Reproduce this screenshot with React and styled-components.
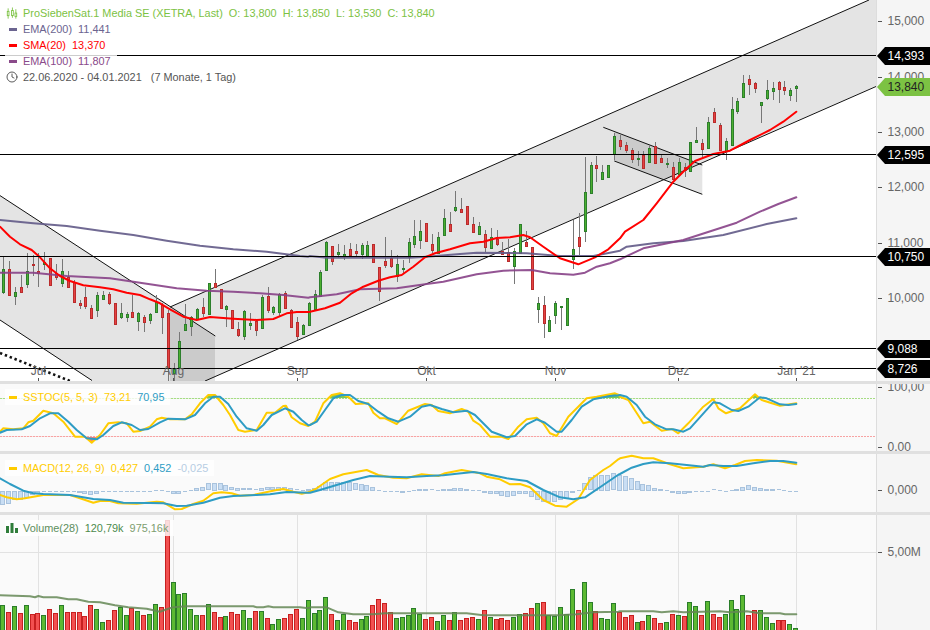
import React from 'react';
import styled, { createGlobalStyle } from 'styled-components';
import { Clock } from 'lucide-react';

const GlobalStyle = createGlobalStyle`
  html, body { margin: 0; padding: 0; background: #fff; }
  body { font-family: "Liberation Sans", Arial, sans-serif; }
`;

const pitch = 5.874;
const col = (i) => Math.round(3.2 + i * pitch);
const WIDTH = 876;

// helper: flat list of coordinates measured in a 3x crop → page pixels
const pts = (arr, x0, y0) => {
  const out = [];
  for (let i = 0; i < arr.length; i += 2) out.push([x0 + arr[i] / 3, y0 + arr[i + 1] / 3]);
  return out;
};
const poly = (p) => p.map(([x, y]) => `${x.toFixed(1)},${y.toFixed(1)}`).join(' ');

/* ---------- candles: high, bodyTop, bodyBottom, low, up ---------- */
const c1 = [
  [172,208,275,282,1],[183,208,286,288,0],[262,277,287,315,1],[225,262,275,278,0],[160,214,253,265,1],[165,192,194,228,0],
  [160,214,219,260,0],[157,186,193,210,1],[175,175,254,257,0],[193,219,230,240,0],[178,214,248,260,1],[214,232,260,260,0],
  [240,246,307,307,0],[300,310,314,328,0],[260,292,317,328,0],[315,324,353,358,0],[275,286,329,350,1],[273,286,297,300,1],
  [275,283,310,316,0],[310,310,371,371,0],[310,340,350,358,1],[335,343,350,365,1],[285,335,350,352,0],[335,340,362,392,1],
  [345,352,367,395,0],[340,343,359,372,1],[285,305,335,335,1],[310,315,352,402,0],[330,340,505,550,0],[490,507,520,550,1],
  [395,423,500,500,1],[312,373,391,393,1],[348,350,377,408,1],[325,328,358,358,1],[295,322,340,350,0],[248,250,342,342,1],
  [207,250,262,265,0],[267,267,323,325,0],[315,318,326,380,1],[330,331,384,385,0],[365,388,404,412,0],[330,334,407,420,1],
  [340,370,374,390,1],[360,362,389,407,0],[285,292,383,384,1],[262,288,329,340,0],[317,322,335,345,1],[278,283,335,352,1],
  [272,280,325,328,0],[328,331,380,380,0],[350,367,407,420,0],[372,374,401,405,1],[305,310,374,375,1],
];
const c2 = [
  [330,343,387,388,1],[270,277,347,347,1],[183,187,270,272,1],[197,199,242,255,0],[192,217,222,235,1],[195,223,228,240,1],
  [190,208,225,232,0],[193,213,218,230,0],[190,196,221,236,1],[183,196,228,230,1],[192,193,245,247,0],[260,262,333,362,0],
  [170,244,255,265,0],[210,235,257,265,0],[225,253,287,305,1],[240,265,267,280,1],[175,187,230,250,1],[120,169,191,205,1],
  [120,154,179,207,1],[130,130,183,183,0],[162,193,209,218,0],[155,172,218,218,1],[87,115,164,165,1],[97,132,152,155,0],
  [33,82,89,95,1],[53,87,95,100,0],[77,79,131,132,0],[110,132,155,160,0],[127,139,161,165,1],[150,162,200,215,0],
  [143,172,203,205,1],[150,178,191,197,0],[187,213,223,225,0],[178,217,242,243,0],[205,214,257,312,1],[133,133,220,220,1],
  [153,186,197,197,0],[202,202,326,326,0],[350,370,386,430,1],[348,376,430,473,0],[407,420,452,455,1],[363,370,404,432,1],
  [378,379,381,450,1],[355,355,434,434,1],[120,208,236,268,1],[100,172,197,225,0],
];
const c3 = [
  [290,397,512,545,1],[305,316,398,400,1],[288,316,323,365,0],[315,337,357,358,1],[315,316,350,350,1],[218,229,283,300,1],
  [225,240,257,270,0],[245,255,270,278,0],[265,270,296,310,0],[272,295,298,318,1],[272,285,323,323,0],[255,265,305,305,1],
  [245,257,309,310,0],[285,295,305,310,0],[295,310,311,325,1],[305,322,358,360,0],[295,307,342,345,1],[310,320,330,352,0],
  [245,247,334,335,1],[202,241,245,247,1],[237,250,266,298,0],[172,187,263,265,1],[145,156,186,188,0],[190,196,270,272,0],
  [235,243,272,300,1],[112,148,255,255,1],[115,124,152,162,1],[45,70,110,115,1],[45,58,71,105,0],[65,68,83,100,0],
  [125,127,135,188,1],[60,91,113,120,1],[65,85,92,120,1],[63,67,87,128,0],[63,82,89,105,0],[85,91,105,122,1],[75,77,85,125,1],
];
const toPx = (list, y0) => list.map(([h, t, b, l, u]) => ({ h: y0 + h / 3, t: y0 + t / 3, b: y0 + b / 3, l: y0 + l / 3, up: !!u }));
const candles = [...toPx(c1, 200), ...toPx(c2, 180), ...toPx(c3, 60)];

/* ---------- main chart lines ---------- */
const sma20 = [
  ...pts([0,80,30,110,60,133,95,150,120,172,150,205,180,228,210,243,250,256,300,262,340,268,380,278,420,285,450,298,480,310,510,328,550,350,590,360,630,351,700,356,770,360,820,357,860,340,890,336,925,336], 0, 200),
  ...pts([0,395,45,385,90,368,125,340,160,320,205,302,240,292,275,285,310,260,345,232,375,220,420,208,480,190,520,185,560,174,600,172,640,165,660,172,700,200,750,235,805,253,855,232,895,208,930,175], 310, 180),
  ...pts([165,515,220,480,260,430,310,365,345,330,375,303,430,282,480,272,540,240,600,210,640,185,679,155], 570, 60),
];
const ema200 = [
  ...pts([0,60,100,70,200,78,300,92,400,105,500,122,600,137,700,148,800,155,900,168,925,170], 0, 200),
  ...pts([0,228,50,233,150,233,300,233,350,230,450,222,500,218,650,220,750,228,850,228,930,212], 310, 180),
  ...pts([170,560,250,550,340,543,460,525,590,492,679,475], 570, 60),
];
const ema100 = [
  ...pts([0,218,100,218,200,228,330,235,420,248,530,265,620,272,700,275,780,280,850,285,925,293], 0, 200),
  ...pts([0,352,80,343,150,328,260,325,350,312,400,305,500,283,580,272,665,270,720,280,790,284,825,278,860,260,900,250,930,238], 310, 180),
  ...pts([220,565,340,540,500,488,570,455,625,432,679,412], 570, 60),
];

/* ---------- stochastic ---------- */
const stochK = [
  ...pts([0,155,10,145,40,148,70,145,85,127,100,122,130,92,160,100,190,125,225,170,255,170,275,188,300,165,325,130,355,127,380,130,400,155,420,153,450,140,470,118,485,113,510,118,555,118,575,103,600,70,625,45,645,45,670,75,690,105,715,150,735,155,770,150,800,98,825,98,850,78,858,77,875,112,900,130,925,138], 0, 380),
  ...pts([0,135,15,125,40,70,65,45,90,40,115,50,137,72,175,70,190,98,210,115,225,115,260,132,295,92,345,72,365,75,385,93,420,100,455,87,475,95,490,122,510,135,540,170,575,170,595,177,625,140,650,118,680,113,700,130,720,160,740,168,775,110,830,55,860,50,915,40,925,44], 310, 380),
  ...pts([0,470,25,480,70,550,90,545,125,572,155,567,175,580,205,550,250,500,280,477,295,505,318,520,360,505,405,463,425,480,480,497,529,490], 620, 240),
];
const stochD = [
  ...pts([0,158,20,150,65,148,90,138,120,115,150,100,175,100,205,125,230,150,260,175,290,178,310,165,340,138,365,127,395,135,420,150,445,147,480,127,505,116,555,118,585,105,615,70,640,50,660,50,685,72,710,110,740,145,770,152,790,135,815,105,855,85,880,95,905,120,925,136], 0, 380),
  ...pts([0,135,20,125,45,90,70,55,95,45,120,45,145,63,175,72,205,95,235,115,265,125,300,110,335,80,360,75,395,87,430,97,470,92,495,105,545,155,590,172,615,168,650,133,680,118,705,128,740,155,755,155,785,120,815,80,850,58,900,48,925,46], 310, 380),
  ...pts([0,465,20,470,50,495,75,530,105,553,140,568,160,568,190,575,210,565,280,487,300,490,335,510,355,513,385,500,420,472,440,475,480,493,505,495,529,492], 620, 240),
];

/* ---------- MACD ---------- */
const macdK = [
  ...pts([0,345,20,352,50,358,75,355,130,345,210,345,240,355,280,368,300,363,330,363,355,370,410,371,470,365,490,367,525,388,545,387,580,372,610,362,640,340,665,337,695,340,720,347,760,345,830,330,850,327,880,335,905,341,925,337], 0, 380),
  ...pts([0,335,20,325,60,297,100,283,170,270,205,285,250,293,290,295,335,283,385,288,405,280,455,270,510,280,530,290,570,298,600,313,630,312,660,322,700,360,735,377,770,380,805,357,840,300,880,270,900,258,925,238], 310, 380),
  ...pts([0,55,35,47,70,55,100,55,150,73,190,85,250,80,280,73,315,85,345,75,375,63,410,60,470,62,529,73], 620, 440),
];
const macdD = [
  ...pts([0,295,30,312,70,332,100,340,130,342,210,345,280,357,330,360,370,368,450,369,490,370,530,378,560,377,610,368,660,353,700,348,770,345,810,343,860,336,925,338], 0, 380),
  ...pts([0,338,30,330,70,318,130,300,180,288,240,290,290,292,350,288,400,286,440,281,490,276,530,282,590,295,650,303,700,330,750,352,790,358,825,352,880,315,925,284], 310, 380),
  ...pts([0,102,35,83,70,72,100,67,150,70,200,75,250,80,270,75,310,78,350,78,400,70,450,63,490,63,529,68], 620, 440),
];
const hist = [
  -42,-38,-28,-26,-22,-12,-8,-2,-2,-2,-2,-2,-2,-6,-10,-12,-8,-2,-2,-4,-4,-3,-3,-2,-2,-2,2,1,-4,-10,-8,-2,3,8,12,22,24,22,18,10,8,7,7,4,9,10,10,12,10,8,4,2,5,
  8,15,26,27,27,27,26,22,21,18,12,1,-1,-3,-4,-6,-1,3,5,6,4,3,5,5,9,9,6,3,1,-6,-9,-8,-15,-18,-15,-8,-8,-17,-26,-32,-33,-32,-26,-25,-6,3,22,40,48,48,48,52,48,
  44,37,28,20,17,9,6,1,-6,-8,-9,-7,-3,-3,-1,4,1,-3,3,6,12,16,12,9,6,6,4,1,-3,-3,
];

/* ---------- volume: top (crop units), up ---------- */
const v1 = [[286,1],[307,0],[289,1],[310,0],[286,1],[313,0],[310,0],[316,1],[298,0],[310,0],[286,1],[307,0],[307,0],[307,0],[319,0],[286,0],[298,1],[337,1],[331,0],[301,0],[292,1],[316,1],[295,0],[304,1],[316,0],[313,1],[283,1],[292,0],[30,0],[217,1],[253,1],[250,1],[298,1],[316,1],[316,0],[283,1],[307,0],[322,0],[319,1],[307,0],[313,0],[301,1],[325,1],[304,0],[304,1],[325,0],[343,1],[328,1],[325,0],[313,0],[298,0],[325,1],[271,1],
  [310,1],[301,1],[262,1],[313,0],[331,1],[313,1],[331,0],[337,0],[328,1],[319,1],[286,0],[268,0],[280,0],[307,0],[325,1],[322,1],[316,1],[295,1],[313,1],[328,0],[322,0],[334,1],[316,1],[331,0],[307,1],[331,0],[325,0],[322,0],[328,1],[301,0],[322,1],[328,0],[325,0],[331,0],[322,1],[313,1],[310,0],[295,0],[280,1],[277,0],[316,1],[319,1],[292,1],[313,1],[238,1],[301,0],[217,1],[277,1],[304,0],[325,1],[328,1],[280,1],[307,0],
  [322,0],[316,0],[337,1],[334,0],[316,1],[325,0],[340,0],[337,1],[313,0],[316,1],[319,0],[277,1],[289,1],[316,0],[274,1],[313,0],[322,0],[313,1],[271,1],[298,1],[256,1],[316,0],[301,0],[301,1],[322,1],[340,1],[331,0],[331,0],[343,1],[355,1]];
const volMA = [
  ...pts([0,256,90,259,105,262,115,258,130,262,170,262,205,268,230,268,265,275,300,277,345,286,385,292,440,296,480,305,500,298,520,292,560,289,620,289,700,289,760,289,770,292,790,292,805,289,820,292,900,292,925,295], 0, 510),
  ...pts([0,292,50,292,85,307,130,313,190,313,225,310,470,310,520,316,700,316,745,316,800,313,850,307,925,305], 310, 510),
  ...pts([0,304,100,304,125,307,160,304,190,307,300,304,330,307,380,304,420,310,480,310,495,313,529,313], 620, 510),
];

const monthTicks = [
  { x: 38.5, label: 'Jul' }, { x: 173.5, label: 'Aug' }, { x: 297.5, label: 'Sep' }, { x: 426.5, label: 'Okt' },
  { x: 555.5, label: 'Nov' }, { x: 678.5, label: 'Dez' }, { x: 796.5, label: "Jan '21" },
];
const levels = [55.5, 154.5, 256.5, 348.5, 368.5];

/* ---------- styled parts ---------- */
const Page = styled.div`
  width: 930px; height: 630px; overflow: hidden; display: flex; flex-direction: column;
  background: #e0e0e0; font-family: "Liberation Sans", Arial, sans-serif;
`;
const Panel = styled.section`
  display: flex; flex: none; height: ${(p) => p.$h}px; overflow: hidden;
  & + & { margin-top: 3px; }
`;
const Plot = styled.div`
  position: relative; width: ${WIDTH}px; flex: none; overflow: hidden;
  background: ${(p) => (p.$white ? '#fff' : '#fafafa')};
  svg { display: block; }
`;
const Axis = styled.div`
  position: relative; flex: 1; background: #f5f5f5; border-left: 1px solid #ddd;
`;
const AxisItem = styled.div`
  position: absolute; left: 0; right: 0; height: 14px; line-height: 14px;
  font-size: 12px; color: #666; padding-left: 10.5px; white-space: pre;
  &::before { content: ''; position: absolute; left: 1px; top: 7px; width: 4px; height: 1px; background: #555; }
`;
const PriceTag = styled.div`
  position: absolute; left: 0; right: 0; height: 18px; line-height: 18px; z-index: 2;
  font-size: 12px; padding-left: 10.5px;
  background: ${(p) => p.$bg}; color: ${(p) => p.$fg};
  clip-path: polygon(0 50%, 8px 0, 100% 0, 100% 100%, 8px 100%);
`;
const Legend = styled.div`
  position: absolute; left: 5px; top: ${(p) => p.$top}px; display: flex; flex-direction: column; align-items: flex-start; z-index: 3;
`;
const LegendRow = styled.div`
  display: flex; align-items: center; height: 16px; padding-right: 6px; font-size: 10.9px;
  background: rgba(255,255,255,0.8); color: ${(p) => p.$color};
`;
const LegendText = styled.span`
  white-space: pre;
`;
const IconSlot = styled.span`
  display: flex; align-items: center; justify-content: center; width: 14px; height: 16px; margin-right: 4px; flex: none;
`;
const Dash = styled.i`
  display: block; width: 8px; height: 3px; margin-left: 2px; background: ${(p) => p.$color};
`;
const Value = styled.span`
  color: ${(p) => p.$color};
`;
const MonthLabel = styled.span`
  position: absolute; transform: translateX(-50%); bottom: 3px; font-size: 12px; line-height: 14px; color: #666; white-space: pre;
`;

const Candles = () => (
  <g shapeRendering="crispEdges">
    {candles.map((c, i) => {
      const x = col(i);
      const top = Math.round(c.t) + 0.5;
      const h = Math.max(1, Math.round(c.b) - Math.round(c.t));
      return (
        <g key={i}>
          <rect x={x} y={c.h} width={1} height={c.l - c.h} fill="#777" />
          <rect x={x - 0.5} y={top} width={2} height={h} fill={c.up ? '#4caf30' : '#e54242'} stroke={c.up ? '#2c7f2c' : '#b92c2c'} />
        </g>
      );
    })}
  </g>
);

const Line = ({ data, color, w = 2 }) => (
  <polyline points={poly(data)} fill="none" stroke={color} strokeWidth={w} strokeLinejoin="round" strokeLinecap="round" />
);

const MainChart = () => (
  <svg width={WIDTH} height={381} viewBox="0 0 876 381">
    <polygon points="170,307 869,0 876,0 876,86 205,381 170,381" fill="rgba(0,0,0,0.105)" />
    <polygon points="0,195.6 215,336 215,381 92,381 0,320" fill="rgba(0,0,0,0.105)" />
    <polygon points="614,131.5 702.3,165 702.3,194.3 614.3,161" fill="rgba(0,0,0,0.105)" />
    <g stroke="#111" fill="none">
      <line x1="170" y1="307" x2="869" y2="0" />
      <line x1="205" y1="381" x2="876" y2="86.5" />
      <line x1="0" y1="195.6" x2="215.3" y2="336" />
      <line x1="0" y1="320" x2="92" y2="380.5" />
      <line x1="603.3" y1="127.3" x2="702.3" y2="165" />
      <line x1="614.3" y1="161" x2="702.3" y2="194.3" />
    </g>
    <line x1="0" y1="353" x2="70" y2="381" stroke="#111" strokeWidth="2.6" strokeDasharray="2.4 2.8" />
    <Candles />
    <Line data={ema200} color="rgba(98,90,135,0.9)" />
    <Line data={ema100} color="rgba(135,65,135,0.9)" />
    <Line data={sma20} color="#ff0000" />
    <g shapeRendering="crispEdges">
      {levels.map((y) => (
        <line key={y} x1="0" y1={y} x2="876" y2={y} stroke="#000" />
      ))}
      {monthTicks.map((m) => (
        <line key={m.x} x1={m.x} y1="378" x2={m.x} y2="381" stroke="#555" />
      ))}
    </g>
  </svg>
);

const StochChart = () => (
  <svg width={WIDTH} height={67} viewBox="0 384 876 67">
    <defs>
      <clipPath id="overbought"><rect x="0" y="384" width="876" height="14.3" /></clipPath>
      <clipPath id="oversold"><rect x="0" y="436.7" width="876" height="14.3" /></clipPath>
    </defs>
    <polygon points={`0,398.3 ${poly(stochK)} 797,398.3`} fill="#7cc850" clipPath="url(#overbought)" />
    <polygon points={`0,436.7 ${poly(stochK)} 797,436.7`} fill="#f27e7e" clipPath="url(#oversold)" />
    <line x1="0" y1="398.5" x2="876" y2="398.5" stroke="#a6dc84" strokeDasharray="2 1" />
    <line x1="0" y1="436.5" x2="876" y2="436.5" stroke="#f7a3a3" strokeDasharray="2 1" />
    <Line data={stochK} color="#ffcc00" />
    <Line data={stochD} color="#2e9cc4" />
  </svg>
);

const MacdChart = () => (
  <svg width={WIDTH} height={58} viewBox="0 454 876 58">
    <g shapeRendering="crispEdges">
      {hist.map((v, i) => {
        const len = Math.abs(v) / 3;
        const y = v > 0 ? 490.7 - len : 490.7;
        const thin = len < 1.4;
        return (
          <rect
            key={i}
            x={col(i) - 2.5}
            y={thin ? Math.round(y) : Math.round(y) + 0.5}
            width={4}
            height={thin ? 1 : Math.max(1, Math.round(len) - 1)}
            fill={thin ? '#a9c3dd' : '#c9def4'}
            stroke={thin ? 'none' : '#a9c3dd'}
          />
        );
      })}
    </g>
    <Line data={macdK} color="#ffcc00" />
    <Line data={macdD} color="#2e9cc4" />
  </svg>
);

const VolumeChart = () => (
  <svg width={WIDTH} height={115} viewBox="0 515 876 115">
    <g stroke="#e2e2e2" shapeRendering="crispEdges">
      <line x1="0" y1="552.5" x2="876" y2="552.5" />
      {monthTicks.map((m) => (
        <line key={m.x} x1={m.x} y1="515" x2={m.x} y2="630" />
      ))}
    </g>
    <g shapeRendering="crispEdges">
      {v1.map(([t, up], i) => (
        <rect
          key={i}
          x={col(i) - 2.5}
          y={Math.round(510 + t / 3) + 0.5}
          width={4}
          height={630 - Math.round(510 + t / 3) + 2}
          fill={up ? '#5cb932' : '#f25050'}
          stroke={up ? '#2a7d2a' : '#c72020'}
        />
      ))}
    </g>
    <Line data={volMA} color="rgba(100,135,85,0.85)" />
  </svg>
);

const CandleIcon = () => (
  <svg width="12" height="13" viewBox="0 0 14 14" fill="none" stroke="#7cc243">
    <path d="M2.5 1v12M7.5 0v12M11.5 2v11" />
    <rect x="1.5" y="4.5" width="2" height="5" fill="#fff" />
    <rect x="6.5" y="3.5" width="2" height="6" fill="#fff" />
    <rect x="10.5" y="6.5" width="2" height="4" fill="#fff" />
  </svg>
);
const BarsIcon = () => (
  <svg width="12" height="10" viewBox="0 0 12 10" fill="#2f7d3a">
    <rect x="0" y="3" width="3" height="7" />
    <rect x="4.5" y="0" width="3" height="10" />
    <rect x="9" y="5" width="3" height="5" />
  </svg>
);

const priceTicks = [[21, '15,000'], [77, '14,000'], [132, '13,000'], [187, '12,000'], [243, '11,000'], [298, '10,000']];
const tags = [[47, '14,393'], [146, '12,595'], [248, '10,750'], [340, '9,088'], [360, '8,726']];

export default function App() {
  return (
    <Page>
      <GlobalStyle />
      <Panel $h={381}>
        <Plot $white>
          <MainChart />
          {monthTicks.map((m) => (
            <MonthLabel key={m.label} style={{ left: m.x }}>{m.label}</MonthLabel>
          ))}
          <Legend $top={5}>
            <LegendRow $color="#7cc243"><IconSlot><CandleIcon /></IconSlot><LegendText>{'ProSiebenSat.1 Media SE (XETRA, Last)  O: 13,800  H: 13,850  L: 13,530  C: 13,840'}</LegendText></LegendRow>
            <LegendRow $color="#6b6490"><IconSlot><Dash $color="#6b6490" /></IconSlot><LegendText>{'EMA(200)  11,441'}</LegendText></LegendRow>
            <LegendRow $color="#ff0000"><IconSlot><Dash $color="#ff0000" /></IconSlot><LegendText>{'SMA(20)  13,370'}</LegendText></LegendRow>
            <LegendRow $color="#8a4a8a"><IconSlot><Dash $color="#8a4a8a" /></IconSlot><LegendText>{'EMA(100)  11,807'}</LegendText></LegendRow>
            <LegendRow $color="#555"><IconSlot><Clock size={12} color="#333" strokeWidth={1.6} /></IconSlot><LegendText>{'22.06.2020 - 04.01.2021   (7 Monate, 1 Tag)'}</LegendText></LegendRow>
          </Legend>
        </Plot>
        <Axis>
          {priceTicks.map(([y, t]) => (
            <AxisItem key={t} style={{ top: y - 7 }}>{t}</AxisItem>
          ))}
          {tags.map(([y, t]) => (
            <PriceTag key={t} $bg="#000" $fg="#fff" style={{ top: y }}>{t}</PriceTag>
          ))}
          <PriceTag $bg="#7cc243" $fg="#222" style={{ top: 78 }}>13,840</PriceTag>
        </Axis>
      </Panel>
      <Panel $h={67}>
        <Plot>
          <StochChart />
          <Legend $top={5}>
            <LegendRow $color="#ffcc00">
              <IconSlot><Dash $color="#ffcc00" /></IconSlot>
              <LegendText>{'SSTOC(5, 5, 3)  73,21  '}<Value $color="#2e9cc4">70,95</Value></LegendText>
            </LegendRow>
          </Legend>
        </Plot>
        <Axis>
          <AxisItem style={{ top: -4 }}>100,00</AxisItem>
          <AxisItem style={{ top: 56 }}>0,00</AxisItem>
        </Axis>
      </Panel>
      <Panel $h={58}>
        <Plot>
          <MacdChart />
          <Legend $top={6}>
            <LegendRow $color="#ffcc00">
              <IconSlot><Dash $color="#ffcc00" /></IconSlot>
              <LegendText>{'MACD(12, 26, 9)  0,427  '}<Value $color="#2e9cc4">0,452</Value>{'  '}<Value $color="#b7cde3">-0,025</Value></LegendText>
            </LegendRow>
          </Legend>
        </Plot>
        <Axis>
          <AxisItem style={{ top: 29 }}>0,000</AxisItem>
        </Axis>
      </Panel>
      <Panel $h={115}>
        <Plot>
          <VolumeChart />
          <Legend $top={5}>
            <LegendRow $color="#5d8f5d">
              <IconSlot><BarsIcon /></IconSlot>
              <LegendText>{'Volume(28)  '}<Value $color="#4d8b4d">120,79k</Value>{'  '}<Value $color="#7d9d6f">975,16k</Value></LegendText>
            </LegendRow>
          </Legend>
        </Plot>
        <Axis>
          <AxisItem style={{ top: 30 }}>5,00M</AxisItem>
        </Axis>
      </Panel>
    </Page>
  );
}
